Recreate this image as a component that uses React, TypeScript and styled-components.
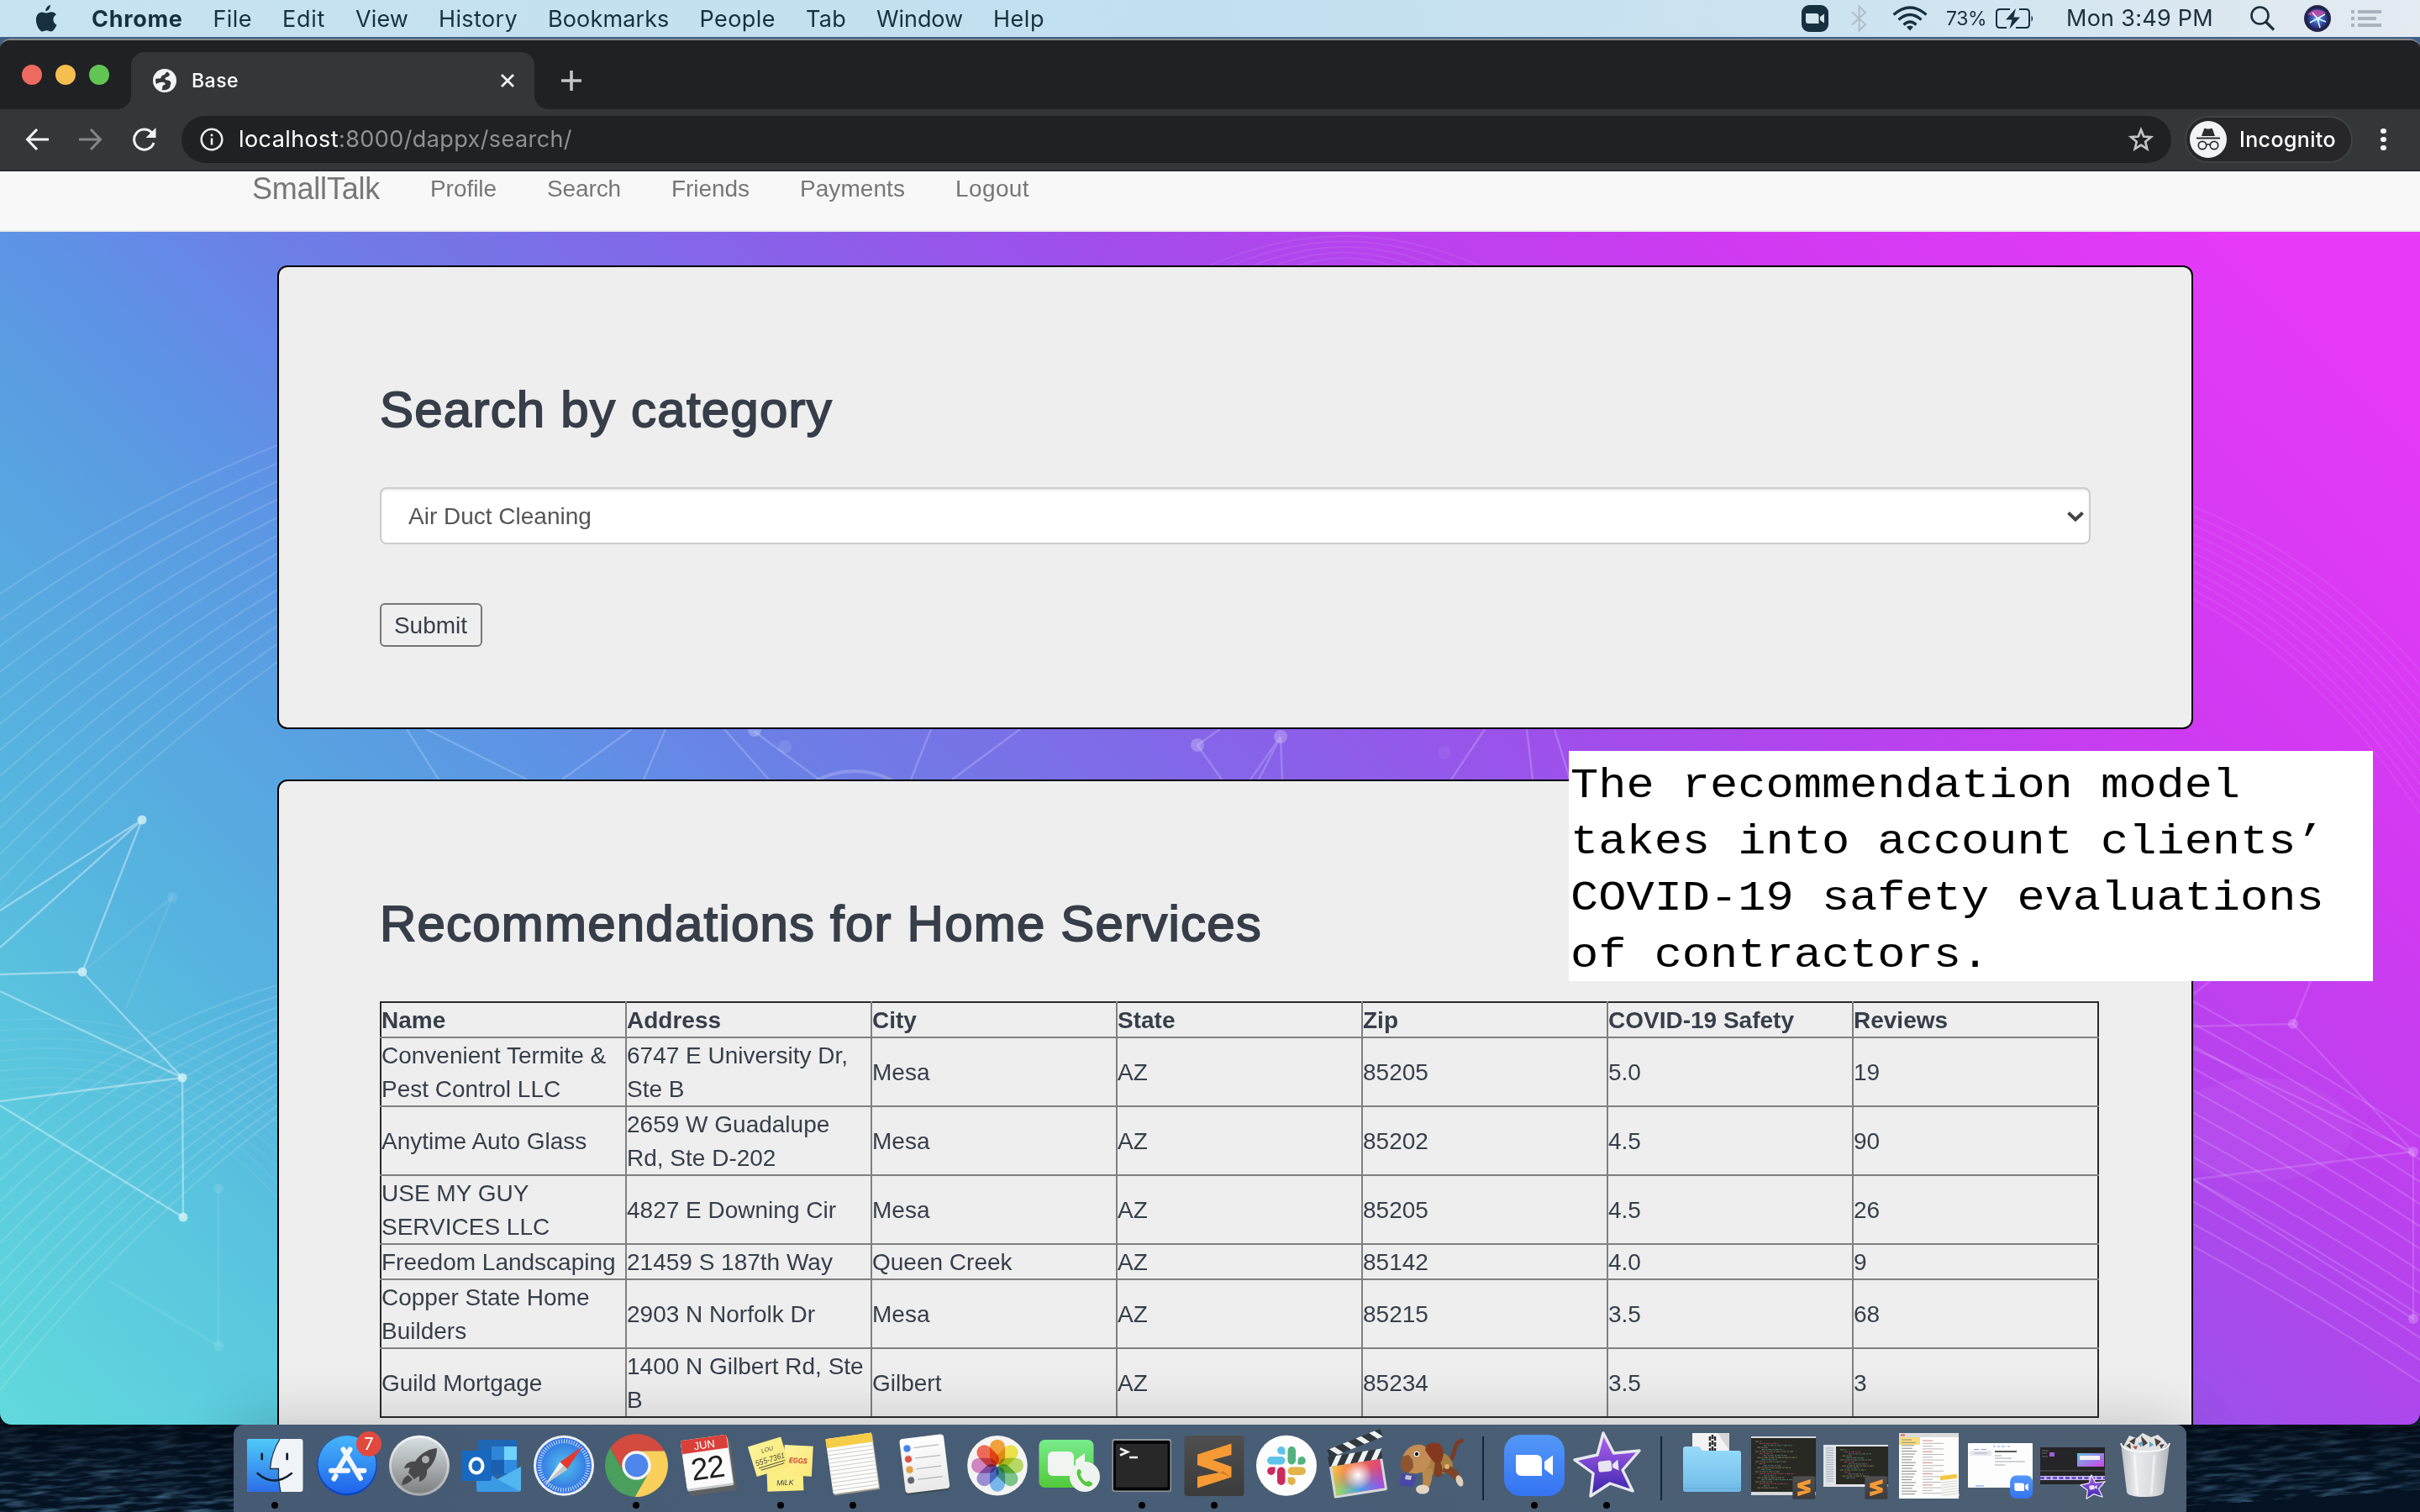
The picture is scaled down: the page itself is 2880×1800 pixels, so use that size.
import React, { useLayoutEffect, useRef, useState } from 'react';
import styled, { createGlobalStyle } from 'styled-components';

const Global = createGlobalStyle`
  * { box-sizing: border-box; }
  html, body { margin: 0; padding: 0; background: #040d18; overflow: hidden; }
  svg { display: block; }
`;

const sans = `"Liberation Sans", Arial, sans-serif`;
const ui = `Inter, Roboto, sans-serif`;

/* ---------- text set to a fixed measure by tracking ---------- */

const Tracked = styled.span`
  display: inline-block;
  white-space: nowrap;
`;

function Fit({ w, children }: { w: number; children: string }) {
  const ref = useRef<HTMLSpanElement>(null);
  const [track, setTrack] = useState(0);
  useLayoutEffect(() => {
    if (ref.current) {
      const natural = ref.current.getBoundingClientRect().width;
      setTrack((w - natural) / children.length);
    }
  }, [w, children]);
  return <Tracked ref={ref} style={{ letterSpacing: track }}>{children}</Tracked>;
}

/* ---------- desktop ---------- */

const Screen = styled.div`
  position: relative;
  width: 2880px;
  height: 1800px;
  overflow: hidden;
  display: flex;
  flex-direction: column;
  background: linear-gradient(#3f5f86 0, #3f5f86 60px, #030b15 1690px, #071a2c 1800px);
`;

const Sea = styled.svg`
  position: absolute;
  left: 0;
  top: 1680px;
`;

const MenuBar = styled.header`
  position: relative;
  height: 44px;
  flex: none;
  display: flex;
  align-items: center;
  padding: 0 46px 0 42px;
  background: linear-gradient(90deg, #c7e3f1 0, #c2dff1 50%, #cce3f0 76%, #e4ebf1 100%);
  color: #16303f;
  font: 400 27px/44px ${ui};
`;

const MenuItems = styled.nav`
  display: flex;
  gap: 36px;
  margin-left: 41px;
  padding-top: 1px;
`;

const AppName = styled.span`
  font-weight: 700;
`;

const Status = styled.div`
  display: flex;
  align-items: center;
  margin-left: auto;
  color: #1d2f3b;
`;

const StatusItem = styled.span<{ $gap: number; $small?: boolean }>`
  margin-left: ${p => p.$gap}px;
  font-size: ${p => (p.$small ? 23 : 27)}px;
`;

/* ---------- browser ---------- */

const Window = styled.section`
  position: relative;
  flex: none;
  height: 1650px;
  margin-top: 2px;
  border-top: 2px solid #85898b;
  border-radius: 12px 12px 14px 14px;
  overflow: hidden;
  display: flex;
  flex-direction: column;
  background: #202124;
`;

const TabStrip = styled.div`
  height: 82px;
  flex: none;
  display: flex;
  align-items: flex-end;
  background: #202124;
`;

const Lights = styled.div`
  display: flex;
  gap: 16px;
  width: 156px;
  padding: 0 0 29px 26px;
`;

const Light = styled.i<{ $c: string }>`
  width: 24px;
  height: 24px;
  border-radius: 50%;
  background: ${p => p.$c};
`;

const Tab = styled.div`
  position: relative;
  width: 480px;
  height: 68px;
  border-radius: 16px 16px 0 0;
  background: #35363a;
  display: flex;
  align-items: center;
  padding: 0 24px 0 26px;
  color: #fff;
  font: 500 23px/68px ${ui};
  &::before, &::after {
    content: '';
    position: absolute;
    bottom: 0;
    width: 16px;
    height: 16px;
  }
  &::before { left: -16px; background: radial-gradient(circle at 0 0, #202124 15.5px, #35363a 16px); }
  &::after { right: -16px; background: radial-gradient(circle at 100% 0, #202124 15.5px, #35363a 16px); }
`;

const TabTitle = styled.span`
  margin: 0 auto 0 18px;
`;

const NewTab = styled.div`
  padding: 0 0 22px 32px;
`;

const Toolbar = styled.div`
  height: 74px;
  flex: none;
  display: flex;
  align-items: center;
  background: #35363a;
  border-bottom: 2px solid #28292c;
`;

const NavButtons = styled.div`
  width: 216px;
  display: flex;
  align-items: center;
  gap: 36px;
  padding-left: 30px;
`;

const Omnibox = styled.div`
  width: 2368px;
  height: 56px;
  border-radius: 28px;
  background: #202124;
  display: flex;
  align-items: center;
  padding: 0 21px 0 22px;
  font: 400 27px/56px ${ui};
  color: #fff;
`;

const Url = styled.span`
  margin: 0 auto 0 18px;
`;

const UrlRest = styled.span`
  color: #8f9194;
`;

const Incognito = styled.div`
  width: 200px;
  height: 56px;
  margin-left: 16px;
  border: 2px solid #414246;
  border-radius: 28px;
  background: #27262b;
  display: flex;
  align-items: center;
  gap: 15px;
  padding-left: 4px;
  color: #fff;
  font: 500 25px/52px ${ui};
`;

const Dots = styled.div`
  display: flex;
  flex-direction: column;
  gap: 3.5px;
  margin-left: 33px;
`;

const Dot = styled.i`
  width: 6.5px;
  height: 6.5px;
  border-radius: 50%;
  background: #f1f3f4;
`;

/* ---------- page ---------- */

const Page = styled.main`
  flex: 1;
  min-height: 0;
  overflow: hidden;
  display: flex;
  flex-direction: column;
`;

const SiteNav = styled.nav`
  height: 72px;
  flex: none;
  display: flex;
  align-items: flex-start;
  gap: 60px;
  padding-left: 300px;
  background: #f8f8f8;
  border-bottom: 2px solid #e7e7e7;
  color: #777;
  font: 400 28px/42px ${sans};
`;

const Brand = styled.span`
  font-size: 36px;
  line-height: 41px;
`;

const Body = styled.div`
  position: relative;
  flex: 1;
  min-height: 0;
  overflow: hidden;
  display: flex;
  flex-direction: column;
  gap: 60px;
  padding: 40px 270px 0 330px;
  background: linear-gradient(45deg, #60d9dc 0, #5bc9de 9.2%, #56b4df 18.5%, #5a9ce2 30%, #5f92e6 34%, #6b80e6 40%, #8862e9 53.6%, #a04eeb 62.7%, #b842ee 71%, #cf3af1 80.5%, #e63af8 95%);
`;

const Mesh = styled.svg`
  position: absolute;
  left: 0;
  top: 0;
`;

const Card = styled.section<{ $h: number }>`
  position: relative;
  flex: none;
  height: ${p => p.$h}px;
  border: 2px solid #000;
  border-radius: 12px;
  background: #eee;
  padding: 137px 120px 0;
  color: #373e4a;
  font: 400 28px/40px ${sans};
`;

const Title = styled.h2`
  margin: 0 0 59px;
  font: 400 60px/66px ${sans};
  -webkit-text-stroke: 1.8px #373e4a;
`;

const Select = styled.div`
  width: 2036px;
  height: 68px;
  display: flex;
  align-items: center;
  justify-content: space-between;
  padding: 1px 6px 0 32px;
  border: 2px solid #ccc;
  border-radius: 8px;
  background: #fff;
  box-shadow: inset 0 2px 2px rgba(0, 0, 0, 0.075);
  color: #555;
`;

const Submit = styled.button`
  display: flex;
  align-items: center;
  justify-content: center;
  width: 122px;
  height: 52px;
  margin-top: 70px;
  padding: 1px 1px 0 0;
  border: 2px solid #767676;
  border-radius: 6px;
  background: #efefef;
  color: #373e4a;
  font: 400 28px/40px ${sans};
`;

const Table = styled.table`
  width: 2046px;
  table-layout: fixed;
  border-collapse: collapse;
  text-align: left;
  tr:first-child > * { border-top-color: #2a2a2c; }
  tr:last-child > * { border-bottom-color: #2a2a2c; }
  tr > *:first-child { border-left-color: #2a2a2c; }
  tr > *:last-child { border-right-color: #2a2a2c; }
`;

const Th = styled.th`
  padding: 1px 0 0;
  border: 2px solid #808080;
  font-weight: 700;
  line-height: 39px;
`;

const Td = styled.td`
  padding: 1px 0 0;
  border: 2px solid #808080;
  line-height: 40px;
  & > div { margin-bottom: -1px; }
`;

const Note = styled.aside`
  position: absolute;
  left: 1867px;
  top: 894px;
  width: 957px;
  height: 274px;
  padding: 9px 0 0 2px;
  background: #fff;
  color: #000;
`;

/* flattened a little, for the low, wide letters of a typewriter face */
const NoteText = styled.div`
  white-space: pre;
  font: 400 55.35px/74.67px "Liberation Mono", monospace;
  transform: scaleY(0.9);
  transform-origin: 0 0;
`;

/* ---------- dock ---------- */

const Dock = styled.footer`
  position: relative;
  width: 2324px;
  height: 104px;
  margin-left: 278px;
  padding-left: 6px;
  flex: none;
  display: flex;
  border-radius: 12px 12px 0 0;
  background: linear-gradient(90deg, #465a73, #485e76 50%, #4d5e72);
  box-shadow: 0 0 70px rgba(0, 0, 0, 0.2);
`;

const Divider = styled.i<{ $l: number; $r: number }>`
  width: 2px;
  height: 76px;
  margin: 14px ${p => p.$r}px 0 ${p => p.$l}px;
  background: #14263a;
`;

const columns = ['Name', 'Address', 'City', 'State', 'Zip', 'COVID-19 Safety', 'Reviews'];
const rows = [
  ['Convenient Termite & Pest Control LLC', '6747 E University Dr, Ste B', 'Mesa', 'AZ', '85205', '5.0', '19'],
  ['Anytime Auto Glass', '2659 W Guadalupe Rd, Ste D-202', 'Mesa', 'AZ', '85202', '4.5', '90'],
  ['USE MY GUY SERVICES LLC', '4827 E Downing Cir', 'Mesa', 'AZ', '85205', '4.5', '26'],
  ['Freedom Landscaping', '21459 S 187th Way', 'Queen Creek', 'AZ', '85142', '4.0', '9'],
  ['Copper State Home Builders', '2903 N Norfolk Dr', 'Mesa', 'AZ', '85215', '3.5', '68'],
  ['Guild Mortgage', '1400 N Gilbert Rd, Ste B', 'Gilbert', 'AZ', '85234', '3.5', '3'],
];

const menus: [string, number][] = [
  ['File', 46.5], ['Edit', 51], ['View', 63], ['History', 94], ['Bookmarks', 144.5],
  ['People', 90.5], ['Tab', 48], ['Window', 103], ['Help', 61],
];

const range = (n: number) => Array.from({ length: n }, (_, i) => i);

function SeaTexture() {
  return (
    <Sea width="2880" height="120" viewBox="0 0 2880 120">
      <defs>
        <filter id="waves" x="0" y="0" width="100%" height="100%">
          <feTurbulence type="fractalNoise" baseFrequency="0.028 0.2" numOctaves="3" seed="7" />
          <feColorMatrix values="0 0 0 0 0.09  0 0 0 0 0.22  0 0 0 0 0.36  2.4 0 0 0 -1.05" />
        </filter>
        <linearGradient id="seaFade" x2="0" y2="1">
          <stop offset="0" stopColor="#020912" stopOpacity=".85" />
          <stop offset="1" stopColor="#061a30" stopOpacity=".25" />
        </linearGradient>
      </defs>
      <rect width="2880" height="120" fill="#04101f" />
      <g transform="rotate(-4 200 60)">
        <rect x="-40" y="-140" width="2980" height="420" filter="url(#waves)" />
      </g>
      <rect width="2880" height="120" fill="url(#seaFade)" />
    </Sea>
  );
}

function MeshArt() {
  const strong = 'M169 976L0 1084M169 976L0 1128M169 976L98 1157L0 1160M98 1157L217 1283L0 1180M217 1283L0 1311M217 1283L218 1449L0 1316';
  const gap = 'M484 868L522 928M507 868L627 928M752 868L669 928M792 868L766 928M862 868L915 928M1108 868L1084 928M1214 868L1133 928M1767 868L1727 928M1817 868L1824 928M1850 868L1872 940M898 871L975 928M1524 877L1488 928M1524 877L1498 928M1524 877L1526 928M1425 887L1454 928M1425 887L1452 868';
  return (
    <Mesh width="2880" height="1420" viewBox="0 276 2880 1420" fill="none" stroke="#fff">
      <g strokeOpacity=".13" strokeWidth="2.2">
        {range(13).map(i => (
          <path key={i} d={`M0 ${707 + 31 * i}Q160 ${598 + 26 * i} 330 ${530 + 21.5 * i}`} />
        ))}
      </g>
      <g strokeOpacity=".13" strokeWidth="2.2">
        {range(13).map(i => (
          <path key={i} d={`M0 ${1355 + 25 * i}Q150 ${1225 + 20 * i} 330 ${1173 + 13 * i}`} />
        ))}
        {range(8).map(i => (
          <path key={`b${i}`} strokeOpacity=".06" d={`M0 ${1215 + 12 * i}Q190 ${1200 + 10 * i} 330 ${1300 + 18 * i}`} />
        ))}
      </g>
      <path d={strong} strokeOpacity=".38" strokeWidth="2.4" />
      <path d="M205 1068L98 1157M205 1068L150 1200M260 1415V1602L130 1525" strokeOpacity=".08" strokeWidth="3" />
      <g fill="#d3f2f6" stroke="none" fillOpacity=".8">
        <circle cx="169" cy="976" r="5.5" /><circle cx="98" cy="1157" r="5.5" />
        <circle cx="217" cy="1283" r="5.5" /><circle cx="218" cy="1449" r="5.5" />
      </g>
      <g fill="#fff" stroke="none" fillOpacity=".11">
        <circle cx="205" cy="1068" r="6" /><circle cx="260" cy="1415" r="6" /><circle cx="260" cy="1602" r="6" />
      </g>
      <path d={gap} strokeOpacity=".2" strokeWidth="2.4" />
      <circle cx="1017" cy="1015" r="97" strokeOpacity=".2" strokeWidth="4" />
      <g fill="#fff" stroke="none" fillOpacity=".24">
        <circle cx="898" cy="869" r="8" /><circle cx="934" cy="889" r="8" fillOpacity=".1" />
        <circle cx="1425" cy="887" r="8" /><circle cx="1524" cy="877" r="8" />
        <circle cx="1719" cy="896" r="8" fillOpacity=".06" />
      </g>
      <g strokeOpacity=".07" strokeWidth="2">
        {range(5).map(i => (
          <path key={i} d={`M${1440 + 26 * i} 316Q1600 ${246 + 13 * i} ${1760 - 26 * i} 316`} />
        ))}
        {range(11).map(i => (
          <path key={`c${i}`} d={`M2610 ${603 + 11 * i}Q2760 ${662 + 13 * i} 2880 ${798 + 17 * i}`} />
        ))}
      </g>
      <g strokeOpacity=".15" strokeWidth="2.2">
        {range(12).map(i => (
          <path key={i} d={`M2610 ${1192 + 26.5 * i}Q2760 ${1275 + 26.5 * i} 2880 ${1354 + 26.5 * i}`} />
        ))}
      </g>
      <path d="M2610 1222L2729 1219L2750 1168M2729 1219L2872 1371L2610 1248M2872 1371L2610 1404L2872 1570V1371M2610 1184L2630 1168" strokeOpacity=".15" strokeWidth="2.4" />
      <ellipse cx="2690" cy="1345" rx="110" ry="62" fill="#fff" fillOpacity=".04" stroke="none" />
      <g fill="#fff" stroke="none" fillOpacity=".22">
        <circle cx="2729" cy="1219" r="6" /><circle cx="2872" cy="1371" r="6" /><circle cx="2872" cy="1570" r="6" />
      </g>
    </Mesh>
  );
}

/* ---------- dock icons, each drawn on an 86 × 104 slot ---------- */

const SlotSvg = styled.svg`
  flex: none;
`;

function Slot({ running, children }: { running?: boolean; children: React.ReactNode }) {
  return (
    <SlotSvg width="86" height="104" viewBox="0 0 86 104">
      {children}
      {running && <circle cx="43" cy="96" r="4" fill="#000" />}
    </SlotSvg>
  );
}

const DefsSvg = styled.svg`
  position: absolute;
`;

const Gradients = () => (
  <DefsSvg width="0" height="0">
    <defs>
      <linearGradient id="finder" x2="0" y2="1"><stop stopColor="#4ecbfa" /><stop offset="1" stopColor="#2c6ee8" /></linearGradient>
      <linearGradient id="store" x2="0" y2="1"><stop stopColor="#46b7fb" /><stop offset="1" stopColor="#1f63ea" /></linearGradient>
      <linearGradient id="silver" x2="0" y2="1"><stop stopColor="#d7dfe3" /><stop offset="1" stopColor="#7f8081" /></linearGradient>
      <linearGradient id="rim" x2="0" y2="1"><stop stopColor="#f4f6f7" /><stop offset="1" stopColor="#a9abad" /></linearGradient>
      <radialGradient id="safari"><stop stopColor="#55c3ea" /><stop offset="1" stopColor="#2d6de5" /></radialGradient>
      <linearGradient id="paper" x2="0" y2="1"><stop stopColor="#fff" /><stop offset="1" stopColor="#e9e9e9" /></linearGradient>
      <linearGradient id="sticky" x2="1" y2="1"><stop stopColor="#fdf49b" /><stop offset="1" stopColor="#fbe877" /></linearGradient>
      <linearGradient id="lime" x2="0" y2="1"><stop stopColor="#79ec8d" /><stop offset="1" stopColor="#52c83b" /></linearGradient>
      <linearGradient id="sublime" x2="0" y2="1"><stop stopColor="#4f4f4f" /><stop offset="1" stopColor="#3b3b3b" /></linearGradient>
      <linearGradient id="zoomBlue" x2="0" y2="1"><stop stopColor="#5398f8" /><stop offset="1" stopColor="#3573f2" /></linearGradient>
      <linearGradient id="purple" x2="0" y2="1"><stop stopColor="#b565f3" /><stop offset="1" stopColor="#3722a8" /></linearGradient>
      <linearGradient id="folder" x2="0" y2="1"><stop stopColor="#97dbfb" /><stop offset="1" stopColor="#6fbbe8" /></linearGradient>
      <linearGradient id="bin" x2="1" y2="0"><stop stopColor="#c4c7ca" /><stop offset=".3" stopColor="#f1f2f3" /><stop offset=".7" stopColor="#dfe1e3" /><stop offset="1" stopColor="#b4b8bb" /></linearGradient>
      <linearGradient id="spectrum" x2="1" y2=".3"><stop stopColor="#f6c94d" /><stop offset=".45" stopColor="#f0704b" /><stop offset="1" stopColor="#d9467f" /></linearGradient>
      <linearGradient id="spectrum2" x2="1" y2="0"><stop stopColor="#9ae05a" /><stop offset=".5" stopColor="#4d9cf0" /><stop offset="1" stopColor="#a14de0" /></linearGradient>
      <linearGradient id="maskDown" x2="0" y2="1"><stop offset=".25" stopColor="#000" /><stop offset=".9" stopColor="#fff" /></linearGradient>
      <mask id="lower" maskContentUnits="objectBoundingBox"><rect width="1" height="1" fill="url(#maskDown)" /></mask>
      <radialGradient id="glow"><stop stopColor="#fff" /><stop offset="1" stopColor="#fff" stopOpacity="0" /></radialGradient>
      <radialGradient id="siri"><stop stopColor="#7fe6f4" /><stop offset=".4" stopColor="#3e62c8" /><stop offset="1" stopColor="#1b1740" /></radialGradient>
      <linearGradient id="thumb" x2="1" y2="1"><stop stopColor="#5dc7dd" /><stop offset="1" stopColor="#d63ff0" /></linearGradient>
    </defs>
  </DefsSvg>
);

const Finder = () => (
  <Slot running>
    <rect x="10" y="17" width="66.5" height="63" rx="3" fill="#f0f3f7" />
    <path d="M13 17H49C43 27 38.500 38 37.500 52.500H47.500C47 62 48 71 50 80H13Q10 80 10 77V20Q10 17 13 17Z" fill="url(#finder)" />
    <path d="M49 17C43 27 38.500 38 37.500 52.500H47.500C47 62 48 71 50 80" fill="none" stroke="#1d3247" strokeWidth="1.300" />
    <path d="M27.700 35V41M57.700 35V41" stroke="#14202c" strokeWidth="2.800" strokeLinecap="round" />
    <path d="M22.500 58Q42 75 63 58" fill="none" stroke="#14202c" strokeWidth="2.400" strokeLinecap="round" />
  </Slot>
);

const AppStore = () => (
  <Slot>
    <circle cx="43" cy="48.700" r="35.700" fill="#0b46c4" />
    <circle cx="43" cy="47.500" r="34.500" fill="url(#store)" />
    <g stroke="#f3f7fb" strokeWidth="6" strokeLinecap="round">
      <path d="M46.500 29.500L32 54M29.500 61L27.500 64.500M38.500 29.500L59 64M24 54.700H44M56 54.700H63.500" />
    </g>
    <circle cx="69" cy="23" r="15" fill="#e1493f" />
    <text x="69" y="30" fontSize="20" fontFamily="Inter, sans-serif" fill="#fff" textAnchor="middle">7</text>
  </Slot>
);

const Launchpad = () => (
  <Slot>
    <circle cx="43" cy="48.700" r="36" fill="url(#rim)" />
    <circle cx="43" cy="48.700" r="33" fill="url(#silver)" />
    <path d="M64 28C52 29 43 36 38 44C32 43 27 46 25 52L32 51L30 57L37 65L43 61V68C50 66 53 59 52 54C60 47 64 38 64 28Z" fill="#47494c" />
    <circle cx="50.500" cy="41.500" r="4.500" fill="#a9afb2" />
    <path d="M30 60C25 62 23 66 22 72C28 71 33 68 35 65Z" fill="#47494c" />
  </Slot>
);

const Outlook = () => (
  <Slot>
    <rect x="27" y="18" width="47" height="44" rx="3" fill="#1f66b5" />
    <rect x="43" y="26" width="15" height="16" fill="#2f86d6" /><rect x="58" y="26" width="15" height="16" fill="#6fd2fa" />
    <rect x="43" y="42" width="15" height="16" fill="#1c5fae" /><rect x="58" y="42" width="15" height="16" fill="#2f8de0" />
    <path d="M25 48L50 65L78 50V77Q78 80 75 80H28Q25 80 25 77Z" fill="#3a9ae4" />
    <path d="M50 65L78 50V77Q78 79 76 79Z" fill="#52b6f1" />
    <rect x="7" y="31" width="36" height="36" rx="3" fill="#1868c0" />
    <ellipse cx="25" cy="49" rx="7.500" ry="8.500" fill="none" stroke="#fff" strokeWidth="4" />
  </Slot>
);

const Safari = () => (
  <Slot>
    <circle cx="43" cy="48.700" r="36" fill="#eceff1" />
    <circle cx="43" cy="48.700" r="33" fill="url(#safari)" />
    <circle cx="43" cy="48.700" r="29" fill="none" stroke="#d9ecfa" strokeWidth="5" strokeDasharray="1 2.030" />
    <path d="M65 26L47 53L38.500 44.500Z" fill="#e5392f" />
    <path d="M21 71L47 53L38.500 44.500Z" fill="#eef0f1" />
    <path d="M21 71L47 53L42.700 48.700Z" fill="#c2c7ca" />
  </Slot>
);

const Chrome = () => (
  <Slot running>
    <g transform="translate(43.500 48.500)">
      {['#d24b3e', '#fbd05a', '#4a9f5d'].map((c, i) => (
        <path key={c} fill={c} transform={`rotate(${i * 120})`} d="M0 -17L33.400 -17A37.500 37.500 0 0 0 -31.400 -20.400L-14.700 8.500L0 0Z" />
      ))}
      <circle r="17.300" fill="#f3f5f6" /><circle r="13.800" fill="#4f86ec" />
    </g>
  </Slot>
);

const Calendar = () => (
  <Slot>
    <g transform="rotate(-8 43 48)">
      <rect x="16" y="20" width="57" height="62" rx="2" fill="#5d6063" />
      <rect x="14" y="18" width="56" height="58" rx="2" fill="#c9cbcc" />
      <rect x="14" y="15" width="55" height="58" rx="2" fill="#fbfbfb" />
      <path d="M14 31V17Q14 15 16 15H67Q69 15 69 17V31Z" fill="#d9403a" />
      <text x="41.500" y="28" fontSize="13" fontFamily="Liberation Sans, sans-serif" fill="#fff" textAnchor="middle">JUN</text>
      <text x="41.500" y="64" fontSize="37" fontFamily="Liberation Sans, sans-serif" fill="#1f1f1f" textAnchor="middle" letterSpacing="-1">22</text>
    </g>
  </Slot>
);

const Stickies = () => (
  <Slot running>
    <g fontFamily="Liberation Sans, sans-serif" fontStyle="italic">
      <g transform="rotate(-2 50 68)"><rect x="27" y="52" width="43" height="27" fill="#fbee83" /><text x="38" y="72" fontSize="9" fill="#2e3c63">MiLK</text></g>
      <g transform="rotate(3 66 40)"><rect x="47" y="25" width="34" height="36" fill="url(#sticky)" /><text x="53" y="46" fontSize="9" fill="#d0342c" fontWeight="700" textLength="22" lengthAdjust="spacingAndGlyphs">EGGS</text></g>
      <g transform="rotate(-17 28 37)"><rect x="8" y="20" width="41" height="37" fill="url(#sticky)" /><text x="22" y="32" fontSize="7" fill="#4b4b3c">LOU</text><text x="11" y="45" fontSize="9.500" fill="#4b4b3c" textLength="36" lengthAdjust="spacingAndGlyphs">555-7361</text><path d="M13 48H46M15 51H44" stroke="#5a5a48" strokeWidth="1" /></g>
    </g>
  </Slot>
);

const Notes = () => (
  <Slot running>
    <g transform="rotate(-8 43 48)">
      <rect x="16" y="14" width="55" height="67" rx="1.500" fill="#a3a08f" />
      <rect x="15" y="13" width="55" height="66" rx="1.500" fill="#fcfcfa" />
      <rect x="15" y="13" width="55" height="11" fill="#f6cd46" />
      {range(11).map(i => <path key={i} d={`M15 ${28 + i * 4.7}H70`} stroke="#c9cacb" strokeWidth=".9" />)}
    </g>
  </Slot>
);

const Reminders = () => (
  <Slot>
    <g transform="rotate(-7 43 48)">
      <rect x="16" y="16" width="53" height="65" rx="4" fill="#3f4850" />
      <rect x="16" y="14" width="53" height="65" rx="4" fill="url(#paper)" />
      {['#3f83f5', '#de5246', '#e8a040', '#5d646b'].map((c, i) => (
        <g key={c}><circle cx="24" cy={26 + i * 12.7} r="5" fill="#dcdcdc" /><circle cx="24" cy={26 + i * 12.7} r="3.900" fill={c} /><path d={`M32 ${26 + i * 12.7}H62`} stroke="#a9abae" /></g>
      ))}
    </g>
  </Slot>
);

const Petal = styled.rect`
  mix-blend-mode: multiply;
`;
const Petals = styled.g`
  isolation: isolate;
`;

const Photos = () => (
  <Slot>
    <circle cx="43" cy="48.700" r="35.800" fill="#f4f4f2" />
    <Petals transform="translate(43 48.700)">
      {['#f0a03c', '#ece04a', '#b6d866', '#7cc48a', '#78b6ea', '#9a8fd2', '#cf86c0', '#ee6a58'].map((c, i) => (
        <Petal key={c} x="-9" y="-31" width="18" height="30" rx="9" fill={c} transform={`rotate(${i * 45})`} />
      ))}
    </Petals>
  </Slot>
);

const FaceTime = () => (
  <Slot>
    <rect x="6.500" y="18" width="65" height="57" rx="7" fill="url(#lime)" />
    <rect x="17" y="32" width="31" height="29" rx="6" fill="#f1f5f1" />
    <path d="M50 42L61 34V58L50 52Z" fill="#f1f5f1" />
    <circle cx="61" cy="62" r="18" fill="#eef3ef" />
    <path d="M52 54Q55 51 57 56Q57 58 55.500 59Q58 66 63 68.500Q65 66 67 67.500Q72 70 69 72.500Q64 76 57 69Q50 61 52 54Z" fill="#54c83f" />
  </Slot>
);

const Terminal = () => (
  <Slot running>
    <rect x="7.500" y="17" width="70.500" height="63" rx="3" fill="#8f9a9f" />
    <rect x="9" y="19" width="67.500" height="59.500" rx="2" fill="#050505" />
    <rect x="12" y="23" width="61.500" height="51.500" fill="#282828" />
    <path d="M17 28.500L26 32.500L17 36.500M28 39H38" fill="none" stroke="#f2f2f2" strokeWidth="2.600" />
  </Slot>
);

const SublimeMark = () => (
  <>
    <rect x="7.500" y="13" width="71" height="72" rx="4" fill="url(#sublime)" />
    <path d="M63.500 22.500L23 35.500V48L49 57L23 62V75.500L63.500 62.500V50L41 42L63.500 36Z" fill="#f59a34" />
    <path d="M49 57L63.500 62.500L54 55.500Z" fill="#d67c1c" />
  </>
);
const Sublime = () => <Slot running><SublimeMark /></Slot>;

const Slack = () => (
  <Slot>
    <circle cx="43" cy="48.700" r="36" fill="#fdfdfd" />
    <g fill="#5ec3ea"><rect x="20" y="38" width="21.500" height="9.500" rx="4.700" /><path d="M41.500 35.500H37A4.700 4.700 0 1 1 41.500 31Z" /></g>
    <g fill="#53b27f"><rect x="44.500" y="26" width="9.500" height="21.500" rx="4.700" /><path d="M56.500 47.500V43A4.700 4.700 0 1 1 61 47.500Z" /></g>
    <g fill="#e2b44b"><rect x="44.500" y="50.500" width="21.500" height="9.500" rx="4.700" /><path d="M44.500 62.500H49A4.700 4.700 0 1 1 44.500 67Z" /></g>
    <g fill="#cc2a5b"><rect x="32" y="50.500" width="9.500" height="21.500" rx="4.700" /><path d="M29.500 50.500V55A4.700 4.700 0 1 1 25 50.500Z" /></g>
  </Slot>
);

const FinalCut = () => (
  <Slot>
    <g transform="rotate(-9 43 60)">
      <rect x="10" y="44" width="64" height="39" rx="2" fill="#d5d8da" />
      <rect x="13" y="44" width="58" height="36" fill="url(#spectrum)" />
      <rect x="13" y="44" width="58" height="36" fill="url(#spectrum2)" mask="url(#lower)" />
      <circle cx="42" cy="60" r="17" fill="url(#glow)" />
      <rect x="10" y="33" width="64" height="12" fill="#30373c" />
      {range(4).map(i => <path key={i} d={`M${12 + i * 16} 45L${20 + i * 16} 33H${27 + i * 16}L${19 + i * 16} 45Z`} fill="#eef1f2" />)}
    </g>
    <g transform="rotate(-22 10 37)">
      <rect x="8" y="29" width="68" height="10" rx="1" fill="#30373c" />
      {range(4).map(i => <path key={i} d={`M${11 + i * 17} 29L${18 + i * 17} 39H${25 + i * 17}L${18 + i * 17} 29Z`} fill="#eef1f2" />)}
    </g>
  </Slot>
);

const ToyDog = () => (
  <Slot>
    <path d="M60 46C76 40 66 22 80 19" fill="none" stroke="#7b3a23" strokeWidth="4.500" strokeLinecap="round" />
    <path d="M38 38Q60 26 68 44Q72 56 58 58Q44 62 38 56Z" fill="#a8803f" />
    <path d="M60 48Q74 50 79 64L73 68Q66 58 56 56Z" fill="#7f4526" />
    <path d="M44 52Q46 66 40 76L33 74Q34 62 32 54Z" fill="#b98a4e" />
    <ellipse cx="33" cy="77" rx="8" ry="5.500" fill="#e3d7c3" /><ellipse cx="77" cy="67" rx="4" ry="7" fill="#ddd0ba" transform="rotate(-20 77 67)" />
    <path d="M8 42Q14 22 32 24Q46 30 42 46Q36 60 22 58Q6 58 8 42Z" fill="#c28c55" />
    <path d="M9 38Q4 50 10 56Q18 60 22 50Q22 40 16 36Z" fill="#8f5430" />
    <path d="M38 24Q56 16 58 34Q56 50 48 46Q42 40 36 30Z" fill="#84381f" />
    <path d="M48 44Q58 42 56 60Q50 66 46 58Z" fill="#7f3f22" />
    <circle cx="26" cy="35" r="3.300" fill="#fff" /><circle cx="26" cy="35" r="2.200" fill="#111" />
    <path d="M8 58L26 61L22 74L5 72Z" fill="#4946a8" /><path d="M13 60L20 61L19 66L12 65Z" fill="#c3c5d6" />
    <circle cx="62" cy="50" r="3" fill="#d8b46f" />
  </Slot>
);

const ZoomMark = () => (
  <>
    <rect x="7" y="12" width="72" height="73" rx="20" fill="url(#zoomBlue)" />
    <path d="M21 36H45Q52 36 52 43V61H28Q21 61 21 54Z" fill="#fff" />
    <path d="M55 44L65 36.500V60.500L55 53Z" fill="#fff" />
  </>
);
const Zoom = () => <Slot running><ZoomMark /></Slot>;

const StarMark = () => (
  <>
    <path d="M39 10L51.500 34L82 31L62 54L74 79L47 70L24 85L27 58L5 42L32 36Z" fill="url(#purple)" stroke="#e6e8ee" strokeWidth="3.400" strokeLinejoin="round" />
    <g transform="rotate(-6 42 49)" fill="#e7e5f2"><rect x="33" y="43" width="16" height="13" rx="3" /><path d="M50 48L57 43V56L50 52Z" /></g>
  </>
);
const IMovie = () => <Slot running><StarMark /></Slot>;

const Folder = () => (
  <Slot>
    <path d="M20 10H64V50H20Z" fill="#f3f3f3" /><path d="M50 10L64 30V10Z" fill="#d5d5d5" />
    <path d="M44 12V36M41 14V32M47 14V32" stroke="#2d2d2d" strokeWidth="2.500" strokeDasharray="5 2" />
    <path d="M9 29Q9 26 12 26H28L32 31H75Q78 31 78 34V77Q78 80 75 80H12Q9 80 9 77Z" fill="url(#folder)" />
    <path d="M9 76H78" stroke="#5fa6d0" strokeWidth="1.200" />
  </Slot>
);

const codeTints = ['#7c8a6a', '#a64868', '#6b7f8a', '#9a8f60', '#588a94'];
function CodeLines({ x, y, w, h }: { x: number; y: number; w: number; h: number }) {
  return (
    <>
      {range(Math.floor(h / 2.4)).map(i => {
        const indent = (i * 7) % 5 * 2.4;
        const len = 8 + ((i * 37) % 11) / 11 * (w - indent - 10);
        return <path key={i} d={`M${x + indent} ${y + i * 2.4}h${len}`} stroke={codeTints[i % 5]} strokeWidth="1" strokeDasharray="4 1.200 2 1" opacity=".8" />;
      })}
    </>
  );
}

const CodeTall = () => (
  <Slot>
    <rect x="4" y="14" width="77" height="70" fill="#d6d8da" /><rect x="4" y="16" width="77" height="64" fill="#282923" />
    <CodeLines x={9} y={20} w={56} h={58} />
    <g transform="translate(50.500 56.500) scale(.38)"><SublimeMark /></g>
  </Slot>
);
const CodeWide = () => (
  <Slot>
    <rect x="4" y="24" width="77" height="50" fill="#dfe3e8" /><rect x="19" y="26" width="62" height="45" fill="#282923" />
    {range(15).map(i => <path key={i} d={`M7 ${28 + i * 2.8}h9`} stroke="#9aa2ad" strokeWidth=".8" />)}
    <CodeLines x={24} y={30} w={46} h={38} />
    <g transform="translate(50.500 56.500) scale(.38)"><SublimeMark /></g>
  </Slot>
);
const NotesWindow = () => (
  <Slot>
    <rect x="8" y="10" width="71" height="78" fill="#fdfdfc" /><rect x="8" y="10" width="71" height="5" fill="#dcdcdc" /><rect x="8" y="15" width="25" height="9" fill="#f7dc7c" />
    <path d="M10 12.500h5" stroke="#e0604f" strokeWidth="2" />
    {range(20).map(i => <path key={i} d={`M11 ${18 + i * 3.4}h${12 + (i * 5) % 7}`} stroke="#8c8c88" strokeWidth="1" />)}
    {range(20).map(i => <path key={`t${i}`} d={`M36 ${19 + i * 3.3}h${12 + (i * 13) % 26}`} stroke={i % 4 ? '#b3aeb0' : '#d47a7a'} strokeWidth=".9" />)}
    <g transform="rotate(-7 68 72)"><rect x="58" y="60" width="20" height="26" fill="#f8f8f4" /><rect x="58" y="60" width="20" height="5" fill="#f3c742" />{range(6).map(i => <path key={i} d={`M58 ${68 + i * 3}h20`} stroke="#cfcfcf" strokeWidth=".7" />)}</g>
  </Slot>
);
const ZoomWindow = () => (
  <Slot>
    <rect x="4" y="22" width="77" height="53" rx="1" fill="#fdfdfe" /><rect x="6" y="31" width="26" height="6" rx="1" fill="#e7e7f0" />
    <path d="M11 29.500h6M20 29.500h6M34 26h3M39 26h3M44 26h4M51 26h3" stroke="#7fa0e8" strokeWidth="1" />
    <path d="M36 32h26" stroke="#333" strokeWidth="1.600" /><path d="M36 37h8M36 40h20M36 44h36M36 48h12M12 34h15" stroke="#a5a9b4" strokeWidth="1" />
    <path d="M13 73h10" stroke="#5d93ef" strokeWidth="1" />
    <g transform="translate(51.500 56) scale(.375)"><ZoomMark /></g>
  </Slot>
);
const MovieWindow = () => (
  <Slot>
    <rect x="4" y="27" width="77" height="44" fill="#252527" /><rect x="15" y="33" width="6" height="5" fill="#a05cd8" /><rect x="48" y="34" width="32" height="16" fill="url(#thumb)" /><rect x="51" y="37" width="24" height="5" fill="#f2f2f6" />
    <path d="M4 55H81" stroke="#5b5b5e" strokeWidth="1" /><rect x="4" y="61" width="77" height="5" fill="#c9bdf0" /><path d="M4 63.500H81" stroke="#6a4fc9" strokeWidth="3" strokeDasharray="5 2.500" />
    <path d="M6 31h8M6 34h6M6 38h7" stroke="#7a7a7d" strokeWidth=".8" />
    <g transform="translate(50 56) scale(.38)"><StarMark /></g>
  </Slot>
);
const Trash = () => (
  <Slot>
    <path d="M17 26L24 13L33 16L40 10L50 15L58 12L64 17L70 24L60 32H26Z" fill="#e2e3e3" />
    <path d="M24 20L32 15L30 24ZM38 13L46 22L40 26ZM54 16L62 20L56 26ZM20 25L25 22L26 29ZM60 24L66 23L62 29Z" fill="#4c4040" /><path d="M34 22L40 20L38 27ZM48 20L53 24L48 27Z" fill="#59a7cf" /><path d="M28 26L34 25L32 30Z" fill="#a85b45" />
    <path d="M14 22Q16 32 43 32Q70 32 72 22L65 80Q64 86 43 86Q22 86 21 80Z" fill="url(#bin)" fillOpacity=".95" />
    <path d="M14 22Q16 32 43 32Q70 32 72 22" fill="none" stroke="#f8f8f8" strokeWidth="1.800" />
    <path d="M30 36L34 84M54 36L50 84" stroke="#fff" strokeOpacity=".5" strokeWidth="3" />
  </Slot>
);

/* ---------- small glyphs ---------- */

const Apple = () => (
  <svg width="26" height="34" viewBox="0 0 26 34" fill="#16303f">
    <path d="M17.800 1C18.100 4.400 15.600 8 12.300 8.300C11.900 5 14.700 1.600 17.800 1Z" />
    <path d="M21.400 18.200C21.400 14.900 23.400 13.200 24.900 12.200C23.300 9.900 20.900 9.300 18.900 9.300C16.500 9.300 15 10.600 13.400 10.600C11.700 10.600 10.200 9.400 8 9.400C4.500 9.400 .900 12.500 .900 18.500C.900 25 5.100 32.500 8.500 32.500C10.400 32.500 11.300 31.300 13.500 31.300C15.700 31.300 16.400 32.500 18.500 32.500C21.600 32.500 24.600 27.200 25.400 24.400C23 23.400 21.400 21.200 21.400 18.200Z" />
  </svg>
);

const StatusIcons = () => (
  <Status>
    <svg width="32" height="32" viewBox="0 0 32 32"><rect width="32" height="32" rx="9" fill="#16303f" /><path d="M5 10H17.500Q20.500 10 20.500 13V22H8Q5 22 5 19ZM22 14L27 10.500V21.500L22 18Z" fill="#d2e5ef" /></svg>
    <StatusItem $gap={27}><svg width="19" height="32" viewBox="0 0 19 32" fill="none" stroke="#aebfca" strokeWidth="2"><path d="M1 8.500L17 23L9.500 30.500V1.500L17 9L1 23.500" /></svg></StatusItem>
    <StatusItem $gap={30}>
      <svg width="42" height="30" viewBox="0 0 42 30" fill="none" stroke="#16303f" strokeWidth="3.200"><path d="M1.500 10.500Q21 -6.500 40.500 10.500M7.500 16.500Q21 4.500 34.500 16.500M13.500 22.500Q21 15.500 28.500 22.500" /><path d="M17 25Q21 22 25 25L21 29.500Z" fill="#16303f" stroke="none" /></svg>
    </StatusItem>
    <StatusItem $gap={22} $small><Fit w={48}>73%</Fit></StatusItem>
    <StatusItem $gap={11}>
      <svg width="46" height="26" viewBox="0 0 46 26" fill="none" stroke="#16303f" strokeWidth="2"><path d="M17 2H5Q1 2 1 6V20Q1 24 5 24H13M24 24H36Q40 24 40 20V6Q40 2 36 2H28" /><path d="M42.500 9.500Q46 13 42.500 17Z" fill="#16303f" stroke="none" /><path d="M24 1L12 14.500H19.500L16.500 25.500L29 11.500H21.500Z" fill="#16303f" stroke="none" /></svg>
    </StatusItem>
    <StatusItem $gap={38}><Fit w={175}>Mon 3:49 PM</Fit></StatusItem>
    <StatusItem $gap={44}><svg width="30" height="30" viewBox="0 0 30 30" fill="none" stroke="#1d2f3b" strokeWidth="2.600"><circle cx="11.500" cy="11.500" r="10" /><path d="M18.500 19L28 28.500" strokeWidth="3.200" /></svg></StatusItem>
    <StatusItem $gap={34}>
      <svg width="32" height="32" viewBox="0 0 32 32"><circle cx="16" cy="16" r="16" fill="#2b2d4d" /><circle cx="16" cy="16" r="14.500" fill="url(#siri)" /><path d="M4 11Q13 1 26 9Q20 12 16 16Q10 12 4 11Z" fill="#c44aa8" opacity=".85" /><path d="M16 16L25 11M16 16L7 21M16 16L19 27M16 16L26 20M16 16L10 9" stroke="#d9fbff" strokeWidth="1.600" /></svg>
    </StatusItem>
    <StatusItem $gap={24}><svg width="36" height="20" viewBox="0 0 36 20" stroke="#a9b3bc" strokeWidth="4"><path d="M0 2H4M8 2H36M0 10H4M8 10H30M0 18H4M8 18H36" /></svg></StatusItem>
  </Status>
);

export default function App() {
  return (
    <>
      <Global />
      <Gradients />
      <Screen>
        <SeaTexture />
        <MenuBar>
          <Apple />
          <MenuItems>
            <AppName><Fit w={108.5}>Chrome</Fit></AppName>
            {menus.map(([m, w]) => <Fit key={m} w={w}>{m}</Fit>)}
          </MenuItems>
          <StatusIcons />
        </MenuBar>

        <Window>
          <TabStrip>
            <Lights><Light $c="#ed6a5e" /><Light $c="#f5bf4f" /><Light $c="#61c554" /></Lights>
            <Tab>
              <svg width="28" height="28" viewBox="0 0 28 28"><circle cx="14" cy="14" r="14" fill="#f1f3f4" /><path d="M17 3.500C14.500 4.500 15.500 7 12 7.500C9.500 8 10.500 11 8 11.500C5.500 12 4 10.500 3.200 12.500C3 15 3.200 16 4 18C6 16.500 9.500 15 13 16C16 17 14.500 19 12.500 19.500C10.500 20 12 23 10.500 25C15.500 26 19 24 20.500 21.500C20 19.500 22 18.500 21 15.500C19.500 12.500 14.500 14.500 14.500 11.500C14.500 9.500 18.500 10 20 7C19.500 5.500 18.500 4.300 17 3.500Z" fill="#35363a" /></svg>
              <TabTitle><Fit w={56}>Base</Fit></TabTitle>
              <svg width="16" height="16" viewBox="0 0 16 16" stroke="#f1f3f4" strokeWidth="2.800"><path d="M1 1L15 15M15 1L1 15" /></svg>
            </Tab>
            <NewTab><svg width="24" height="24" viewBox="0 0 24 24" stroke="#c3c5c8" strokeWidth="3.600"><path d="M12 0V24M0 12H24" /></svg></NewTab>
          </TabStrip>
          <Toolbar>
            <NavButtons>
              <svg width="28" height="26" viewBox="0 0 28 26" fill="none" stroke="#f1f3f4" strokeWidth="3"><path d="M14 1L2.500 13L14 25M2.500 13H28" /></svg>
              <svg width="28" height="26" viewBox="0 0 28 26" fill="none" stroke="#85868a" strokeWidth="3"><path d="M14 1L25.500 13L14 25M25.500 13H0" /></svg>
              <svg width="28" height="28" viewBox="0 0 28 28" fill="none" stroke="#f1f3f4" strokeWidth="3"><path d="M25 18A12 12 0 1 1 22.500 6L24.500 8.500" /><path d="M27.500 0V12H15.500Z" fill="#f1f3f4" stroke="none" /></svg>
            </NavButtons>
            <Omnibox>
              <svg width="28" height="28" viewBox="0 0 28 28" fill="none" stroke="#e8eaed" strokeWidth="2.600"><circle cx="14" cy="14" r="12.300" /><path d="M14 12.500V20.500M14 7.500V10.300" /></svg>
              <Url><Fit w={119}>localhost</Fit><UrlRest><Fit w={278}>:8000/dappx/search/</Fit></UrlRest></Url>
              <svg width="30" height="30" viewBox="0 0 30 30" fill="none" stroke="#c2c4c7" strokeWidth="2.700"><path d="M15 3.500L18.200 11.500L26.800 12.200L20.200 17.800L22.300 26.300L15 21.700L7.700 26.300L9.800 17.800L3.200 12.200L11.800 11.500Z" /></svg>
            </Omnibox>
            <Incognito>
              <svg width="44" height="44" viewBox="0 0 44 44"><circle cx="22" cy="22" r="22" fill="#f1f3f4" /><path d="M14 18L17 9.500Q17.500 8.500 19 9Q22 10.200 25 9Q26.500 8.500 27 9.500L30 18ZM8 19.500H36V21.500H8Z" fill="#2b2c30" /><g fill="none" stroke="#2b2c30" strokeWidth="1.700"><circle cx="15" cy="29" r="4.700" /><circle cx="29" cy="29" r="4.700" /><path d="M19.700 28.500Q22 27 24.300 28.500" /></g></svg>
              <Fit w={115}>Incognito</Fit>
            </Incognito>
            <Dots><Dot /><Dot /><Dot /></Dots>
          </Toolbar>

          <Page>
            <SiteNav>
              <Brand><Fit w={152}>SmallTalk</Fit></Brand>
              <Fit w={79}>Profile</Fit>
              <Fit w={88}>Search</Fit>
              <Fit w={93}>Friends</Fit>
              <Fit w={125}>Payments</Fit>
              <Fit w={88}>Logout</Fit>
            </SiteNav>
            <Body>
              <MeshArt />
              <Card $h={552}>
                <Title><Fit w={539}>Search by category</Fit></Title>
                <Select>
                  Air Duct Cleaning
                  <svg width="20" height="14" viewBox="0 0 20 14" fill="none" stroke="#444" strokeWidth="4"><path d="M1.500 2.500L10 10.500L18.500 2.500" /></svg>
                </Select>
                <Submit>Submit</Submit>
              </Card>
              <Card $h={900}>
                <Title><Fit w={1050}>Recommendations for Home Services</Fit></Title>
                <Table>
                  <tbody>
                    <tr>{columns.map(c => <Th key={c}>{c}</Th>)}</tr>
                    {rows.map(r => <tr key={r[0]}>{r.map((v, i) => <Td key={i}><div>{v}</div></Td>)}</tr>)}
                  </tbody>
                </Table>
              </Card>
            </Body>
          </Page>
        </Window>

        <Dock>
          <Finder /><AppStore /><Launchpad /><Outlook /><Safari /><Chrome /><Calendar /><Stickies /><Notes />
          <Reminders /><Photos /><FaceTime /><Terminal /><Sublime /><Slack /><FinalCut /><ToyDog />
          <Divider $l={18} $r={17} />
          <Zoom /><IMovie />
          <Divider $l={21} $r={16} />
          <Folder /><CodeTall /><CodeWide /><NotesWindow /><ZoomWindow /><MovieWindow /><Trash />
        </Dock>

        <Note><NoteText>{'The recommendation model\ntakes into account clients’\nCOVID-19 safety evaluations\nof contractors.'}</NoteText></Note>
      </Screen>
    </>
  );
}
